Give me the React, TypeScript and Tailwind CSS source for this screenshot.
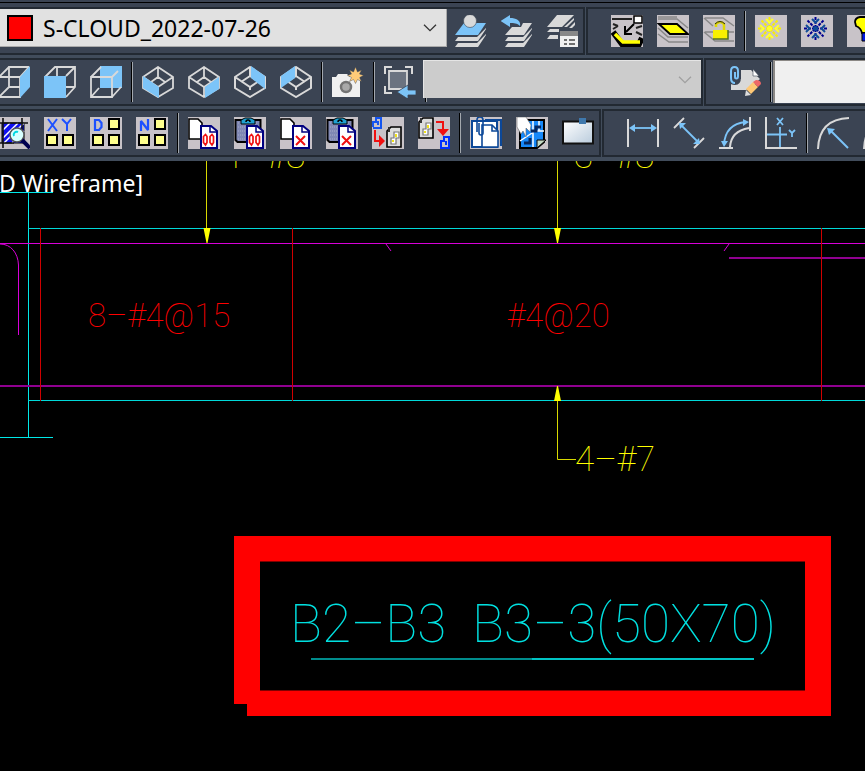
import type { ReactNode } from "react";

const GRAY = "#d9d9d9";
const BLUE = "#7cc4f8";

function Tool({ label, children, tile = false }: { label: string; children: ReactNode; tile?: boolean }) {
  return (
    <button type="button" aria-label={label} className="size-8 shrink-0">
      <svg width="32" height="32" viewBox="0 0 32 32" fill="none" className={tile ? "block bg-[#c8c3c8]" : "block"}>
        {children}
      </svg>
    </button>
  );
}

function Sep() {
  return <div className="-mx-[5px] -mt-1 h-10 w-0.5 shrink-0 border-l border-l-black border-r border-r-[#a3a8ae]" />;
}

function Chevron({ color }: { color: string }) {
  return (
    <svg width="14" height="8" viewBox="0 0 14 8" fill="none" className="pointer-events-none mr-[9px] shrink-0">
      <path d="M1 .7l6 6 6-6" stroke={color} strokeWidth="1.3" />
    </svg>
  );
}

const panel = "flex h-12 shrink-0 items-start border-2 border-[#222932] bg-[#3b4453]";
const tools = "flex gap-[14px] pt-1.5";

const Layers = ({ x = 0 }: { x?: number }) => (
  <g fill={GRAY}>
    <path d={x ? "M4 26l3-4h15l9-9v1l-8 12z" : "M0 26l3-4h19l9-9v1l-8 12z"} />
    <path d={x ? "M4 32l3-4h15l9-9v1l-8 12z" : "M0 32l3-4h19l9-9v1l-8 12z"} />
  </g>
);

const Iso = ({ face }: { face: string }) => (
  <>
    <path d="M1 11L16 1l15 10v11L16 31 1 22zM1 11l15 10 15-10M16 21v3M16 1v9M16 10l-9 6M16 10l9 6" stroke={GRAY} strokeWidth="2" />
    <path d={face} fill={BLUE} />
  </>
);

const IsoFront = ({ face }: { face: string }) => (
  <>
    <path d="M1 11L16 1l15 10v11L16 31 1 22zM16 2v9M16 11l-7 5M16 11l7 5M1 11l6 4M31 11l-6 4M16 21v10M16 21l15-10M16 21L1 11" stroke={GRAY} strokeWidth="1.800" />
    <path d={face} fill={BLUE} />
  </>
);

const Snow = ({ a, b }: { a: string; b: string }) => (
  <>
    <path d="M14.500 2v23M3 13.500h23M6.500 5.500l16 16M22.500 5.500l-16 16" stroke={a} strokeWidth="2" strokeDasharray="3 1" />
    <path d="M11 4l3.500 3.500L18 4M11 23l3.500-3.500L18 23M5 10l3.500 3.500L5 17M24 10l-3.500 3.500L24 17" stroke={b} strokeWidth="2" />
    <circle cx="14.500" cy="13.500" r="2.500" fill={b} />
  </>
);

const YellowBoxes = ({ spots }: { spots: number[][] }) => (
  <>
    {spots.map(([x, y]) => (
      <rect key={`${x}-${y}`} x={x} y={y} width="10" height="10" fill="#ffff8c" stroke="#000" strokeWidth="2" />
    ))}
  </>
);

const Page = () => <path d="M1 2h9l4 4v16H1z" fill="#fff" stroke="#000" strokeWidth="1.6" />;

const Clipboard = () => (
  <>
    <path d="M1.500 3h25v22h-23l-2-2z" fill="#8088b4" stroke="#000" strokeWidth="2" />
    <path d="M4 6h20M4 10h20M4 14h20M4 18h20M4 22h20" stroke="#a8acc8" strokeWidth="1" strokeDasharray="1 1" />
    <path d="M7 3l4-2h6l4 2v4H7z" fill="#20a0d0" stroke="#000" />
    <path d="M12 5a2 2 0 014 0" stroke="#000" strokeWidth="1.500" />
  </>
);

const BluePage = ({ cross = false }: { cross?: boolean }) => (
  <>
    <path d="M13 9h10l6 5v17H13z" fill="#fff" stroke="#000080" strokeWidth="2" />
    <path d="M22 9v6h7" stroke="#000080" strokeWidth="1.500" />
    {cross ? (
      <path d="M16 19l9 9M25 19l-9 9" stroke="#f01010" strokeWidth="2" />
    ) : (
      <path d="M17.500 17.500l1.500 2v6l-1.500 2.500-2-2.500v-6zM24 17.500l1.500 2v6L24 28l-2-2.500v-6z" stroke="#f01010" strokeWidth="1.700" />
    )}
  </>
);

const Tag = () => (
  <>
    <path d="M1 5l4-4h10v20H1z" fill="#ddd" stroke="#000" strokeWidth="1.600" />
    <path d="M5 18v-6h3V6h5v6h-3v6z" fill="#fff" stroke="#777" strokeWidth="1.200" />
    <path d="M10 8v3M7 14v2" stroke="#f0e000" strokeWidth="1.800" />
    <path d="M3 1v5" stroke="#333" strokeWidth="2" />
  </>
);

const cadText = "font-['Roboto',sans-serif] font-thin";

export default function App() {
  return (
    <main className="min-h-screen w-full overflow-hidden bg-black">
      <header className="flex flex-col gap-[3px] overflow-hidden bg-[#414c5b] pb-1">
        <div className="-mb-[3px] h-[7px] border-t-2 border-[#3b4453] bg-[#3b4453]">
          <div className="h-px bg-black" />
        </div>

        <div className="flex gap-px">
          <div className={`${panel} border-l-0 pr-1`}>
            <label className="flex h-[38px] w-[447px] items-center border-r border-b border-[#aaa] bg-[#e1e1e1] pl-[7px]">
              <span className="size-[26px] shrink-0 border-2 border-black bg-[#ff0000]" />
              <select aria-label="Layer" className="min-w-0 flex-1 appearance-none bg-transparent pl-[10px] font-['Noto_Sans',sans-serif] text-[23px] leading-8 text-black">
                <option>S-CLOUD_2022-07-26</option>
              </select>
              <Chevron color="#333" />
            </label>
            <div className={`${tools} ml-2`}>
              <Tool label="Make object's layer current">
                <path d="M0 20L9 8h22l-8 12z" fill={BLUE} />
                <Layers />
                <circle cx="15" cy="6" r="6.500" fill={GRAY} stroke="#3b4453" strokeWidth=".6" />
              </Tool>
              <Tool label="Layer previous">
                <path d="M4 20l7-8h9l2-4h9l-8 12z" fill={GRAY} />
                <Layers x={4} />
                <path d="M-.5 6L9 0v3c7 0 11 3 10 8-3-3-6-3-10-3v4z" fill={BLUE} />
              </Tool>
              <Tool label="Layer states">
                <path d="M0 12L10 0h17L15 12zM17 12l10-9v2l-7 7zM22 13l6-6v3l-3 3zM0 17l3-3h9v3zM0 24l3-4h8v4z" fill={GRAY} />
                <path d="M13 16h18v16H13z" fill="#f0f0f0" />
                <path d="M13 16h18v5H13z" fill="#888" />
                <path d="M17 25h3M17 29h3M22 25h6M22 29h6" stroke="#444" strokeWidth="1.500" />
              </Tool>
            </div>
          </div>
          <div className={`${panel} flex-1 overflow-hidden border-r-0 pl-[23px]`}>
            <div className={tools}>
              <Tool label="Move to layer" tile>
                <path d="M1 4h20M2 14l5-3M2 9l5 2M25 13l6-2M25 17l6 3M2 18l5 3" stroke="#222" strokeWidth="2" />
                <path d="M2 17l9 12h17l3-6" stroke="#000" strokeWidth="6" />
                <path d="M4 19l8 8h17" stroke="#ff0" strokeWidth="3.500" />
                <path d="M23 9l-8 8M14 11v8h7" stroke="#000" strokeWidth="2" />
                <path d="M23 1h8v7h-8z" fill="#fff" stroke="#000" strokeWidth="1.500" />
              </Tool>
              <Tool label="Isolate layer" tile>
                <path d="M1 4h19l11 9M1 19l11 8h19M1 13l10 9h20M1 2h19" stroke="#888" strokeWidth="1.500" />
                <path d="M2 9h18l11 10H13z" fill="#ff0" stroke="#000" strokeWidth="1.800" />
              </Tool>
              <Tool label="Lock layer" tile>
                <path d="M2 3h18l11 8M1 3l9 8M1 17l11 9h19M2 17h9M24 17h7" stroke="#888" strokeWidth="1.500" />
                <path d="M10 15h15v9H10z" fill="#f8f000" />
                <path d="M10 24h15V15" stroke="#507020" strokeWidth="1.500" />
                <path d="M13 12V9q4-4 8 0v6" stroke="#e0d800" strokeWidth="2.500" />
                <path d="M12 9q5-5 10 0" stroke="#222" />
              </Tool>
              <Sep />
              <Tool label="Freeze layer" tile><Snow a="#f8f000" b="#ffff30" /></Tool>
              <Tool label="Thaw layer" tile><Snow a="#000090" b="#104c98" /></Tool>
              <Tool label="Layer on" tile>
                <path d="M8 7q0-4 5-5h8q5 1 5 6-1 7-5 10h-6q-1-5-6-7z" fill="#ff0" stroke="#000" strokeWidth="1.800" />
                <path d="M15 18h8v8h-8z" fill="#0018e0" stroke="#000" />
              </Tool>
            </div>
          </div>
        </div>

        <div className="flex gap-px">
          <div className={`${panel} border-l-0`}>
            <div className={`${tools} -ml-0.5`}>
              <Tool label="Right view">
                <path d="M1 11h21v20H1zM11 21V1h20M1 11L11 1M22 11l9-10M11 21h20M1 31l10-10" stroke={GRAY} strokeWidth="1.800" />
                <path d="M22 11L32 0v21L22 32z" fill={BLUE} />
              </Tool>
              <Tool label="Front view">
                <path d="M1 11L11 1h20v20l-9 10M22 10l9-9M13 1v10M22 21h9" stroke={GRAY} strokeWidth="1.800" />
                <path d="M0 10h22v22H0z" fill={BLUE} />
              </Tool>
              <Tool label="Back view">
                <path d="M10 0h22v22H10z" fill={BLUE} />
                <path d="M1 11h21v20H1zM1 11L11 1M22 11l6-6M22 31l9-10M1 31l8-9" stroke={GRAY} strokeWidth="1.800" />
              </Tool>
              <Sep />
              <Tool label="SW isometric"><IsoFront face="M1 10l16 11v11L1 22z" /></Tool>
              <Tool label="SE isometric"><IsoFront face="M17 21l14-10v12L17 32z" /></Tool>
              <Tool label="NE isometric"><Iso face="M17 0l14 10v13L17 12z" /></Tool>
              <Tool label="NW isometric"><Iso face="M15 0v12L1 22V10z" /></Tool>
              <Sep />
              <Tool label="Create camera">
                <path d="M0 11h4l2-3h9l3 3h10v20H0z" fill="#f0f0f0" />
                <circle cx="14" cy="21" r="5" fill="#a9a9a9" stroke="#747474" strokeWidth="2.500" />
                <path d="M23.500 1l2 5 4-2-2 4 4 1.500-4 2 2 4-4-2-2 4-2-4-4 2 2-4-4-2 4-1.500-2-4 4 2z" fill="#ffcb78" stroke="#3b4453" strokeWidth=".4" />
              </Tool>
              <Sep />
              <Tool label="Named viewports">
                <path d="M1 8V1h7M21 1h7v7M1 20v7h7" stroke={GRAY} strokeWidth="2" />
                <path d="M5 5h18v18H5z" fill="#6b7380" stroke={GRAY} strokeWidth="1.800" />
                <path d="M13 26l11-7v5h8v5h-8v4z" fill={BLUE} stroke="#3b4453" strokeWidth=".8" />
              </Tool>
            </div>
            <div className="ml-[7px]">
              <label className="flex h-[38px] w-[278px] items-center border-t border-l border-[#e5e5e5] bg-[#ccc]">
                <select aria-label="Viewport" disabled className="h-full min-w-0 flex-1 appearance-none bg-transparent" />
                <Chevron color="#a0a0a0" />
              </label>
              <div className="ml-0.5 h-1 w-0.5 border-r border-l border-r-[#a3a8ae] border-l-black" />
            </div>
          </div>
          <div className={`${panel} flex-1 overflow-hidden border-r-0 pl-[23px]`}>
            <div className={tools}>
              <Tool label="Edit reference">
                <path d="M2 13h10V4h10l9 9-7 6-7 5H2z" fill={GRAY} />
                <path d="M24 3l6 7h-6z" fill="#fff" stroke="#3b4453" strokeWidth=".6" />
                <path d="M7 4v9q-5 0-5-4V5q0-4 4-4t4 4v6q0 6-4 6-5 0-5-5" stroke="#3b4453" strokeWidth="4" />
                <path d="M6 6v5q0 1.500 1.500 1.500T9 10V5q0-4-3.500-4T2 5v7q0 5 4 5" stroke={BLUE} strokeWidth="2" />
                <path d="M16 30l1-6 5 5z" fill="#ddd" />
                <path d="M17 23l7-7 5 5-7 7z" fill="#ffc875" />
                <path d="M24 16l3-2q5 0 5 4l-3 3z" fill="#ef6767" />
              </Tool>
              <Sep />
            </div>
            <input aria-label="Reference name" className="ml-1.5 h-[43px] min-w-0 flex-1 border-t border-l-2 border-[#8b8885] bg-[#f0f0f0]" />
          </div>
        </div>

        <div className="flex gap-px">
          <div className={`${panel} border-l-0 pr-[5px]`}>
            <div className={`${tools} -ml-0.5`}>
              <Tool label="Find in area" tile>
                <path d="M4 6h22v20H4z" fill="#1010f0" stroke="#000" />
                <path d="M5 13l7-7M5 21L20 6M6 26L26 6M14 26l12-12" stroke="#fff" strokeWidth="1.500" />
                <path d="M5 1v30M24 1v12M0 6h30M0 26h16" stroke="#111" strokeWidth="1.600" />
                <circle cx="19" cy="18" r="7" fill="#d8ffff" stroke="#555" strokeWidth="1.500" />
                <path d="M16 19a3 3 0 014-4" stroke="#00d8e0" strokeWidth="2" />
                <path d="M24 23l8 8" stroke="#000050" strokeWidth="4" />
              </Tool>
              <Tool label="Align XY" tile>
                <path d="M4 2l9 12M13 2L4 14M18 2l5 5 4-5M23 7v7" stroke="#1c50ff" strokeWidth="2" />
                <YellowBoxes spots={[[3, 18], [19, 18]]} />
              </Tool>
              <Tool label="Align by distance" tile>
                <path d="M5 3h4l2.500 3v4L9 13H5z" stroke="#1c50ff" strokeWidth="2.200" />
                <YellowBoxes spots={[[19, 2], [3, 18], [19, 18]]} />
              </Tool>
              <Tool label="Align by number" tile>
                <path d="M5 14V4l7 9V2" stroke="#1c50ff" strokeWidth="2.200" strokeLinejoin="bevel" />
                <YellowBoxes spots={[[19, 2], [3, 18], [19, 18]]} />
              </Tool>
              <Sep />
              <Tool label="Copy with base point zero" tile><Page /><BluePage /></Tool>
              <Tool label="Paste at zero" tile><Clipboard /><BluePage /></Tool>
              <Tool label="Cut copy" tile><Page /><BluePage cross /></Tool>
              <Tool label="Paste exploded" tile><Clipboard /><BluePage cross /></Tool>
              <Tool label="Block to reference" tile>
                <path d="M1 10V5h3V1h5v10H1M6 4v4" stroke="#1455f0" strokeWidth="2" />
                <path d="M3 13v11h5" stroke="#f01010" strokeWidth="2" /><path d="M7 18l6 6-6 6z" fill="#f01010" />
                <g transform="translate(14 9)"><Tag /></g>
              </Tool>
              <Tool label="Reference to block" tile>
                <Tag />
                <path d="M18 5h7v8" stroke="#f01010" strokeWidth="2" /><path d="M19 12h12l-6 7z" fill="#f01010" />
                <path d="M23 31v-7h3v-4h5v11zM28 24v4" stroke="#0030ff" strokeWidth="2" />
              </Tool>
              <Sep />
              <Tool label="Attach drawing" tile>
                <path d="M2 4h25v26H2z" fill="#fff" stroke="#0c4898" strokeWidth="2" />
                <path d="M15 3h16v26" stroke="#0c4898" strokeWidth="2" />
                <path d="M12 8h10l6 6v16H12z" fill="#fff" stroke="#0c4898" strokeWidth="1.600" />
                <path d="M22 8v6h6M7 15V3q0-3 3-3t3 3v13q0 2-2 2t-2-2V6" stroke="#0c4898" strokeWidth="1.600" />
              </Tool>
              <Tool label="Clip map" tile>
                <path d="M4 3h24v22l-7 6H4z" fill="#1688f8" stroke="#000" strokeWidth="2" />
                <path d="M15 14h13M17 4v26M23 4v10M4 24l12-8" stroke="#fff" strokeWidth="1.500" />
                <path d="M15 14h5v-4h5M8 26h6v-5" stroke="#06275e" strokeWidth="3" />
                <path d="M21 31v-8h9z" fill="#c4dbc4" stroke="#000" />
                <path d="M1 0h9l5 8-1 7-4-4v9l-3-6-2 3-4-7z" fill="#fff" stroke="#666" strokeWidth=".6" />
              </Tool>
              <Tool label="Viewport frame">
                <defs><linearGradient id="sheet" x1="0" y1="0" x2="1" y2="1"><stop stopColor="#fff" /><stop offset="1" stopColor="#b9cbdc" /></linearGradient></defs>
                <path d="M1 4.500h30v22H1z" fill="url(#sheet)" stroke="#111" strokeWidth="2" />
                <path d="M17 1h7v6h-7z" fill="#3f78ac" />
              </Tool>
            </div>
          </div>
          <div className={`${panel} flex-1 overflow-hidden border-r-0 pl-[23px]`}>
            <div className={tools}>
              <Tool label="Linear dimension">
                <path d="M1 2v28M31 2v28" stroke={GRAY} strokeWidth="2" />
                <path d="M4 11h24" stroke={BLUE} strokeWidth="1.800" /><path d="M2 11l6-4v8zM30 11l-6-4v8z" fill={BLUE} />
              </Tool>
              <Tool label="Aligned dimension">
                <path d="M1 11L11 1M21 31l10-10" stroke={GRAY} strokeWidth="1.800" />
                <path d="M8 8l17 17" stroke={BLUE} strokeWidth="1.800" /><path d="M6 6h7l-6 6zM27 27h-7l6-6z" fill={BLUE} />
              </Tool>
              <Tool label="Arc length dimension">
                <path d="M31 0v14M0 31h14M11 30q1-16 19-19" stroke={GRAY} strokeWidth="2" />
                <path d="M5 28Q6 7 27 5" stroke={BLUE} strokeWidth="1.800" /><path d="M30 5l-6-3v7zM5 30l-3-6h7z" fill={BLUE} />
              </Tool>
              <Tool label="Ordinate dimension">
                <path d="M1 0v31h31" stroke={GRAY} strokeWidth="2" />
                <path d="M15 10v20M2 17.500h20M12 1l6 7M18 1l-6 7M24 13l3 3 3-3M27 16v4" stroke={BLUE} strokeWidth="1.800" />
              </Tool>
              <Sep />
              <Tool label="Radius dimension">
                <path d="M1 32Q2 2 32 1" stroke={GRAY} strokeWidth="2" />
                <path d="M31 31L13 13" stroke={BLUE} strokeWidth="2" /><path d="M10 11l8 1-6 6z" fill={BLUE} />
              </Tool>
              <Tool label="Jogged dimension">
                <path d="M1 32Q2 2 32 1" stroke={GRAY} strokeWidth="2" />
              </Tool>
            </div>
          </div>
        </div>
      </header>

      <svg className="block h-[610px] w-full" role="img" aria-label="Beam reinforcement drawing" fill="none">
        <g stroke="#00d8d8">
          <path d="M0 31.500h53M28.500 31v245M0 276.500h53" stroke="#00e8e8" />
          <path d="M28 67.500h2400M28 239.500h2400" />
        </g>
        <path d="M0 82.500h2400M0 83c11 0 18 9 18.500 21v70M386 83l5 7M729 83l-5 7" stroke="#d800d8" />
        <path d="M0 225h2400M729 97h1700" stroke="#900090" strokeWidth="2" />
        <path d="M40.500 67v173M292.500 67v173M821.500 67v173" stroke="#d00000" />
        <path d="M206.500 0v70M557.500 0v70M557.500 238v60.500H576" stroke="#d8d800" />
        <path d="M203.500 67h7l-3 15h-1zM554 67h7l-3 15h-1zM554 240h7l-3-15h-1z" fill="#ffff00" />

        <g className={cadText}>
          <g fill="#ffff00" className="text-[35px]">
            <text x="225" y="7">1–#8</text>
            <text x="574" y="7">3–#8</text>
            <text x="575" y="310">4–#7</text>
          </g>
          <g fill="#ff0000" className="text-[33px]">
            <text x="88" y="166">8–#4@15</text>
            <text x="507" y="166">#4@20</text>
          </g>
        </g>

        <path d="M234 375h597v180H247v-12h-13zM260 400.500v129h545v-129z" fill="#ff0000" fillRule="evenodd" />
        <g className={`${cadText} text-[53px]`} fill="#00e0e0">
          <text x="290" y="481">B2–B3</text>
          <text x="472" y="481">B3–3(50X70)</text>
        </g>
        <path d="M311 498h221" stroke="#008c8c" strokeWidth="2" />
        <path d="M532 498h222" stroke="#00c4c4" strokeWidth="2" />

        <text x="143" y="31" textAnchor="end" fill="#fff" className="font-['Noto_Sans',sans-serif] text-[23px]">2D Wireframe]</text>
      </svg>
    </main>
  );
}
